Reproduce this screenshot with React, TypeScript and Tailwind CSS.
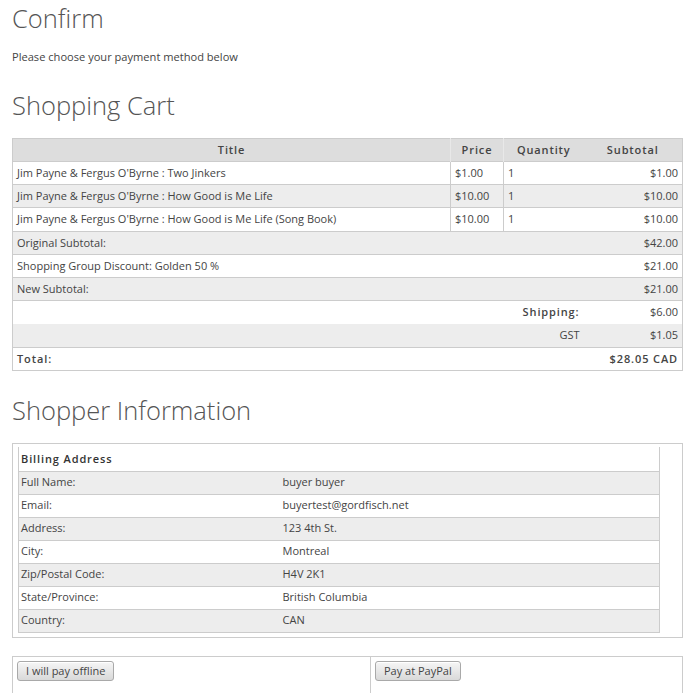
import React from "react";

const items = [
  { title: "Jim Payne & Fergus O'Byrne : Two Jinkers", price: "$1.00", qty: "1", subtotal: "$1.00" },
  { title: "Jim Payne & Fergus O'Byrne : How Good is Me Life", price: "$10.00", qty: "1", subtotal: "$10.00" },
  { title: "Jim Payne & Fergus O'Byrne : How Good is Me Life (Song Book)", price: "$10.00", qty: "1", subtotal: "$10.00" },
];

const billing = [
  ["Full Name:", "buyer buyer"],
  ["Email:", "buyertest@gordfisch.net"],
  ["Address:", "123 4th St."],
  ["City:", "Montreal"],
  ["Zip/Postal Code:", "H4V 2K1"],
  ["State/Province:", "British Columbia"],
  ["Country:", "CAN"],
];

function Btn({ children }: { children: React.ReactNode }) {
  return (
    <button className="block h-[20px] rounded-[3px] border border-[#a9a9a9] bg-gradient-to-b from-[#f6f6f6] to-[#d9d9d9] px-[8px] text-[11px] leading-none text-[#444] shadow-[inset_0_1px_0_#fff]">
      {children}
    </button>
  );
}

export default function App() {
  const th = "h-[23px] border-l border-[#e8e8e8] bg-[#dddddd] px-1 text-[11px] font-semibold tracking-[0.08em] text-[#444] first:border-l-0";
  const td = "h-[23px] border-t border-[#cccccc] px-1 text-[11px] text-[#444]";

  return (
    <div className="pb-6 pl-3 pr-[5px] font-['Open_Sans',sans-serif] text-[#555]">
      <h1 className="pt-[3px] text-[25.5px] font-light leading-[30px] text-[#555]">Confirm</h1>
      <p className="mt-[16px] text-[11.1px] leading-4 text-[#444]">Please choose your payment method below</p>

      <h2 className="mt-[25px] text-[25.5px] font-light leading-[30px]">Shopping Cart</h2>
      <table className="mt-[18px] w-full border-collapse border border-[#cccccc]">
        <colgroup>
          <col />
          <col className="w-[53px]" />
          <col className="w-[80px]" />
          <col className="w-[99px]" />
        </colgroup>
        <thead>
          <tr>
            <th className={th}>Title</th>
            <th className={th}>Price</th>
            <th className={th}>Quantity</th>
            <th className={`${th} border-l-0`}>Subtotal</th>
          </tr>
        </thead>
        <tbody>
          {items.map((it, i) => {
            const h = i === 2 ? "h-[24px]" : "";
            return (
              <tr key={it.title} className={i % 2 === 1 ? "bg-[#ededed]" : "bg-white"}>
                <td className={`${td} ${h}`}>{it.title}</td>
                <td className={`${td} ${h} border-l`}>{it.price}</td>
                <td className={`${td} ${h} border-l`}>{it.qty}</td>
                <td className={`${td} ${h} text-right`}>{it.subtotal}</td>
              </tr>
            );
          })}
          <tr className="bg-[#ededed]">
            <td className={td} colSpan={3}>Original Subtotal:</td>
            <td className={`${td} text-right`}>$42.00</td>
          </tr>
          <tr className="bg-white">
            <td className={td} colSpan={3}>Shopping Group Discount: Golden 50 %</td>
            <td className={`${td} text-right`}>$21.00</td>
          </tr>
          <tr className="bg-[#ededed]">
            <td className={td} colSpan={3}>New Subtotal:</td>
            <td className={`${td} text-right`}>$21.00</td>
          </tr>
          <tr className="bg-white">
            <td className={`${td} text-right font-semibold tracking-[0.08em]`} colSpan={3}>Shipping:</td>
            <td className={`${td} text-right`}>$6.00</td>
          </tr>
          <tr className="bg-[#ededed]">
            <td className="h-[24px] px-1 text-right text-[11px] text-[#444]" colSpan={3}>GST</td>
            <td className="h-[24px] px-1 text-right text-[11px] text-[#444]">$1.05</td>
          </tr>
          <tr className="bg-white">
            <td className={`${td} font-semibold tracking-[0.08em]`} colSpan={3}>Total:</td>
            <td className={`${td} text-right font-semibold tracking-[0.08em]`}>$28.05 CAD</td>
          </tr>
        </tbody>
      </table>

      <h2 className="mt-[24px] text-[25.5px] font-light leading-[30px]">Shopper Information</h2>
      <div className="mt-[18px] border border-[#cccccc] px-[5px] pb-1 pt-[3px]">
        <table className="w-[642px] border-collapse border-x border-[#cccccc]">
          <tbody>
            <tr className="bg-white">
              <td className="h-[24px] px-[2px] text-[11px] font-semibold tracking-[0.08em] text-[#333]" colSpan={2}>
                Billing Address
              </td>
            </tr>
            {billing.map(([k, v], i) => (
              <tr key={k} className={i % 2 === 0 ? "bg-[#ededed]" : "bg-white"}>
                <td className={`${td} w-[260px] px-[2px] ${i === billing.length - 1 ? "border-b" : ""}`}>{k}</td>
                <td className={`${td} px-0 ${i === billing.length - 1 ? "border-b" : ""}`}>{v}</td>
              </tr>
            ))}
          </tbody>
        </table>
      </div>

      <table className="mt-[18px] w-full border-collapse border border-[#cccccc]">
        <tbody>
          <tr>
            <td className="h-[40px] w-[358px] px-1 pb-[12px] pt-[4px] align-top">
              <Btn>I will pay offline</Btn>
            </td>
            <td className="h-[40px] border-l border-[#cccccc] px-1 pb-[12px] pt-[4px] align-top">
              <Btn>Pay at PayPal</Btn>
            </td>
          </tr>
        </tbody>
      </table>
    </div>
  );
}
